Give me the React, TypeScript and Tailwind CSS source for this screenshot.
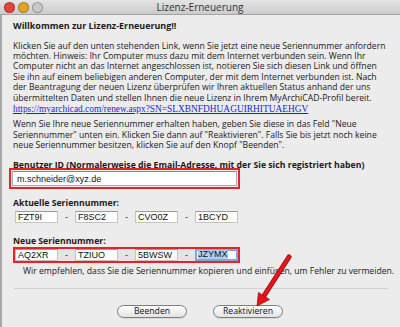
const ui = "font-['Open_Sans',sans-serif]";
const sans = "font-['Liberation_Sans',Arial,sans-serif]";

const intro = [
  "Klicken Sie auf den unten stehenden Link, wenn Sie jetzt eine neue Seriennummer anfordern",
  "möchten. Hinweis: Ihr Computer muss dazu mit dem Internet verbunden sein. Wenn Ihr",
  "Computer nicht an das Internet angeschlossen ist, notieren Sie sich diesen Link und öffnen",
  "Sie ihn auf einem beliebigen anderen Computer, der mit dem Internet verbunden ist. Nach",
  "der Beantragung der neuen Lizenz überprüfen wir Ihren aktuellen Status anhand der uns",
  "übermittelten Daten und stellen Ihnen die neue Lizenz in Ihrem MyArchiCAD-Profil bereit.",
];

const outro = [
  'Wenn Sie Ihre neue Seriennummer erhalten haben, geben Sie diese in das Feld "Neue',
  'Seriennummer" unten ein. Klicken Sie dann auf "Reaktivieren". Falls Sie bis jetzt noch keine',
  'neue Seriennummer besitzen, klicken Sie auf den Knopf "Beenden".',
];

const current = ["FZT9I", "F8SC2", "CVO0Z", "1BCYD"];
const fresh = ["AQ2XR", "TZIUO", "5BWSW", "JZYMX"];

function Light({ color }: { color: string }) {
  return <span className={`block w-[11px] h-[11px] rounded-full border border-black/25 ${color}`} />;
}

function Field({ value, selected }: { value: string; selected?: boolean }) {
  if (selected) {
    return (
      <div className="w-[43px] h-[12px] bg-white border-2 border-[#7fa7dc] flex items-center pl-[1px]">
        <span className={`${sans} text-[9px] leading-[9px] text-[#111] bg-[#b3cdf2]`}>{value}</span>
      </div>
    );
  }
  return (
    <div className={`w-[43px] h-[12px] bg-white border border-[#c4c4c4] border-t-[#9c9c9c] flex items-center pl-[2px] ${sans} text-[9px] leading-[10px] text-[#111]`}>
      {value}
    </div>
  );
}

function Dash() {
  return <div className={`w-[17px] text-center ${sans} text-[9px] leading-[10px] text-[#333]`}>-</div>;
}

export default function App() {
  return (
    <div className={`w-[400px] h-[327px] relative overflow-hidden bg-[#ececec] ${ui} text-[#1a1a1a]`}>
      {/* title bar */}
      <div className="h-[15px] relative flex items-center bg-gradient-to-b from-[#e4e4e4] to-[#cbcbcb] border-b border-[#a3a3a3]">
        <div className="flex gap-[3px] pl-[4px]">
          <Light color="bg-[#e2453f]" />
          <Light color="bg-[#e0a42a]" />
          <Light color="bg-[#c9c9c9]" />
        </div>
        <div className="absolute inset-0 flex items-center justify-center text-[10px] leading-[12px] text-[#333]">Lizenz-Erneuerung</div>
      </div>

      <div className="border-l-2 border-[#a8a8a8] h-[312px] pl-[11px]">
        <div className="pt-[5px] text-[8.95px] leading-[11px] font-bold whitespace-nowrap">Willkommen zur Lizenz-Erneuerung!!</div>

        <div className="mt-[9.5px] text-[8.65px] leading-[10.4px] whitespace-nowrap">
          {intro.map((l) => (
            <div key={l}>{l}</div>
          ))}
        </div>

        <a className="block mt-[1.5px] font-['Liberation_Serif',serif] text-[9.4px] leading-[11px] text-[#1d1dd6] underline whitespace-nowrap">
          https://myarchicad.com/renew.aspx?SN=SLXBNFDHUAGUIRHITUAEHGV
        </a>

        <div className="mt-[4px] text-[8.65px] leading-[10.5px] whitespace-nowrap">
          {outro.map((l) => (
            <div key={l}>{l}</div>
          ))}
        </div>

        <div className="mt-[9.5px] text-[8.7px] leading-[10px] font-bold whitespace-nowrap">
          Benutzer ID (Normalerweise die Email-Adresse, mit der Sie sich registriert haben)
        </div>
        <div className="-ml-[4px] -mt-[2px] w-[231px] border-2 border-[#e3242b] p-[1px]">
          <div className={`h-[15px] bg-white border border-[#a9a9a9] border-t-[#8a8a8a] flex items-center pl-[4px] ${sans} text-[9px] leading-[10px] text-[#111]`}>
            m.schneider@xyz.de
          </div>
        </div>

        <div className="mt-[9px] text-[8.7px] leading-[10px] font-bold">Aktuelle Seriennummer:</div>
        <div className="mt-[3px] ml-[2px] flex items-center">
          {current.map((v, i) => (
            <div key={v} className="flex items-center">
              {i > 0 && <Dash />}
              <Field value={v} />
            </div>
          ))}
        </div>

        <div className="mt-[12.5px] text-[8.7px] leading-[10px] font-bold">Neue Seriennummer:</div>
        <div className="mt-[1px] w-[227px] border-2 border-[#e3242b] flex items-center bg-[#e4e4e4]">
          {fresh.map((v, i) => (
            <div key={v} className="flex items-center">
              {i > 0 && <Dash />}
              <Field value={v} selected={i === 3} />
            </div>
          ))}
        </div>

        <div className="mt-[3.5px] pl-[10px] text-[8.65px] leading-[10px] whitespace-nowrap">
          Wir empfehlen, dass Sie die Seriennummer kopieren und einfügen, um Fehler zu vermeiden.
        </div>

        <div className="mt-[12px] ml-[1px] w-[374px] h-px bg-[#d2d2d2]" />

        <div className="mt-[16px] -ml-[13px] flex justify-center gap-[26px]">
          {["Beenden", "Reaktivieren"].map((b) => (
            <button
              key={b}
              className="w-[70px] h-[13px] rounded-full border border-[#7d7d7d] bg-gradient-to-b from-white to-[#e3e3e3] text-[8.7px] leading-[11px] text-[#111] shadow-[0_1px_0_rgba(0,0,0,0.08)]"
            >
              {b}
            </button>
          ))}
        </div>
      </div>

      {/* red annotation arrow */}
      <svg className="absolute left-0 top-0 pointer-events-none" width="400" height="327">
        <line x1="289" y1="257" x2="264.5" y2="295" stroke="#a50d12" strokeWidth="5" strokeLinecap="round" />
        <line x1="289" y1="257" x2="264.5" y2="295" stroke="#e8161d" strokeWidth="3" strokeLinecap="round" />
        <polygon points="257,306 269.5,299.5 258.5,292.5" fill="#e3151c" stroke="#a50d12" strokeWidth="0.8" />
      </svg>
    </div>
  );
}
